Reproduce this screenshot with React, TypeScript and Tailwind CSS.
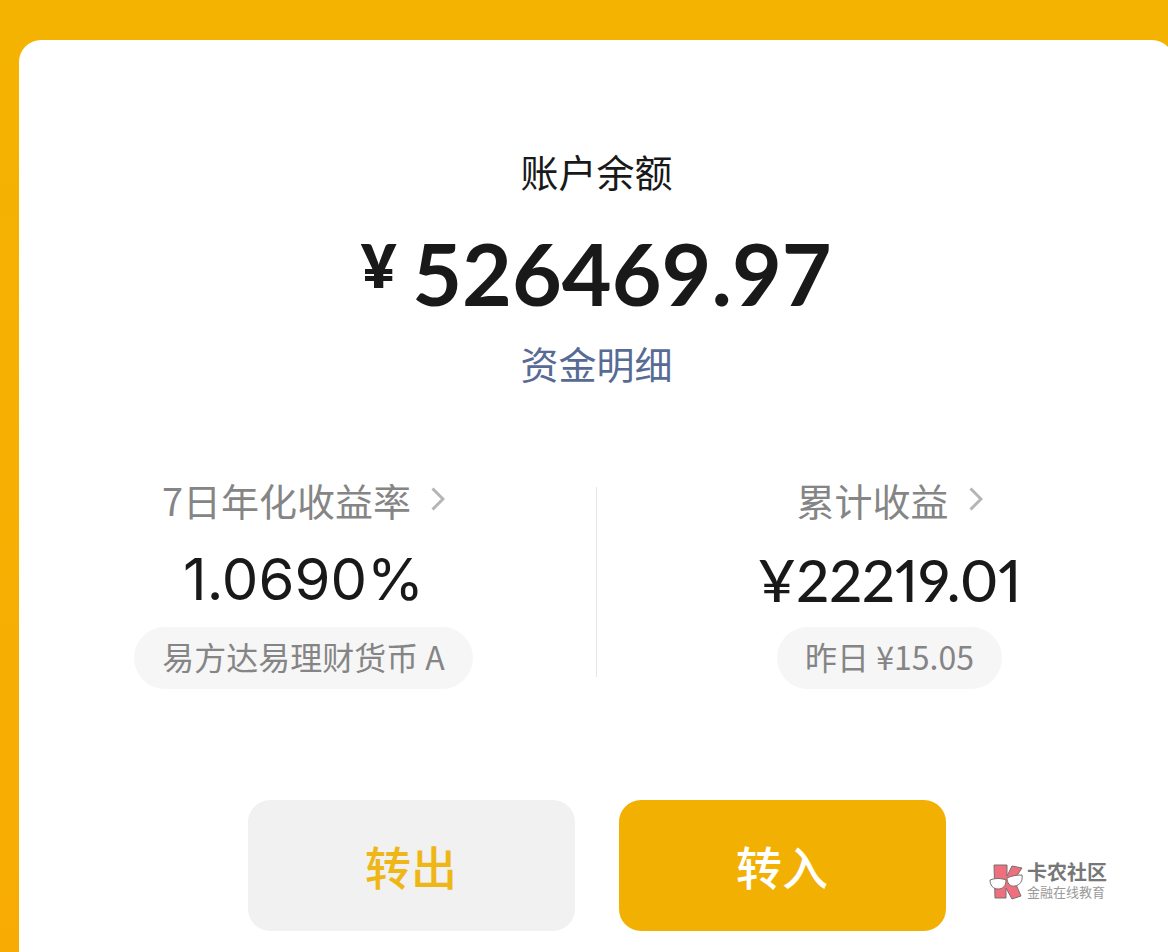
import type { ReactNode } from 'react'

interface StatProps {
  label: string
  value: ReactNode
  note: string
}

function Chevron() {
  return (
    <svg viewBox="0 0 14 26" className="h-[26px] w-[14px]" fill="none" stroke="#b5b5b5" strokeWidth="3" aria-hidden="true">
      <path d="M1.500 2.500L12 13 1.500 23.500" />
    </svg>
  )
}

function Stat({ label, value, note }: StatProps) {
  return (
    <div className="flex flex-col items-center">
      <button type="button" className="flex h-14 items-center gap-5 text-[38px] text-[#858585]">
        <span>{label}</span>
        <Chevron />
      </button>
      <div className="mt-5 flex h-16 items-center text-[#191919]">{value}</div>
      <div className="mt-4 rounded-full bg-[#f6f6f6] px-7 pb-1 text-[32px] leading-[58px] text-[#858585]">{note}</div>
    </div>
  )
}

function Watermark() {
  return (
    <div className="absolute right-[61px] bottom-[51px] flex items-center gap-1 font-['Liberation_Sans','Noto_Sans_CJK_SC',sans-serif]">
      <svg viewBox="0 0 34 36" className="h-9 w-[34px]" stroke="#77706f" strokeWidth="1" strokeLinejoin="round" aria-hidden="true">
        <path d="M5 1h13v11l5-10 10 2-8 12 7 16-9 3-6-11v10H6z" fill="#ee6f7d" />
        <path d="M1 16c5-2 11-2 16 0 0 6-3 9-8 9s-8-4-8-9z" fill="#fff" />
        <path d="M18 14c4-2 9-3 15-3 1 6-2 10-7 11s-8-3-8-8z" fill="#fff" />
      </svg>
      <div className="flex flex-col gap-0.5">
        <span className="text-[20px] leading-5 font-bold text-[#777]">卡农社区</span>
        <span className="text-[13px] leading-4 text-[#999]">金融在线教育</span>
      </div>
    </div>
  )
}

export default function App() {
  return (
    <div className="relative min-h-screen overflow-hidden bg-linear-to-b from-[#f5b301] to-[#f8ac03] pt-10 pl-[19px] font-['Noto_Sans_CJK_SC',sans-serif]">
      <main className="-mr-1.5 flex min-h-[calc(100vh-40px)] flex-col rounded-t-[22px] bg-white pt-[103px]">
        <section className="flex flex-col items-center">
          <h1 className="text-[38px] leading-14 text-[#191919]">账户余额</h1>
          <div className="mt-[26px] flex items-start gap-4 font-[Lato,sans-serif] font-bold text-[#191919]">
            <span className="text-[60px] leading-20 font-extrabold">¥</span>
            <span className="text-[86px] leading-24">526469.97</span>
          </div>
          <button type="button" className="mt-[14px] text-[38px] leading-14 text-[#576b95]">资金明细</button>
        </section>

        <section className="mt-20 grid grid-cols-[1fr_1px_1fr] gap-2">
          <Stat
            label="7日年化收益率"
            value={<span className="font-[Inter,sans-serif] text-[58px]">1.0690%</span>}
            note="易方达易理财货币 A"
          />
          <div className="mt-4 mb-3 bg-[#e5e5e5]" />
          <Stat
            label="累计收益"
            value={<span className="font-[Lato,sans-serif] text-[58px] font-medium proportional-nums">¥22219.01</span>}
            note="昨日 ¥15.05"
          />
        </section>

        <section className="mt-[111px] mb-5 flex justify-center gap-11 text-[46px] font-medium">
          <button type="button" className="h-[131px] w-[327px] rounded-[22px] bg-[#f1f1f1] text-[#efb618]">转出</button>
          <button type="button" className="h-[131px] w-[327px] rounded-[22px] bg-[#f2b002] text-white">转入</button>
        </section>
      </main>
      <Watermark />
    </div>
  )
}
